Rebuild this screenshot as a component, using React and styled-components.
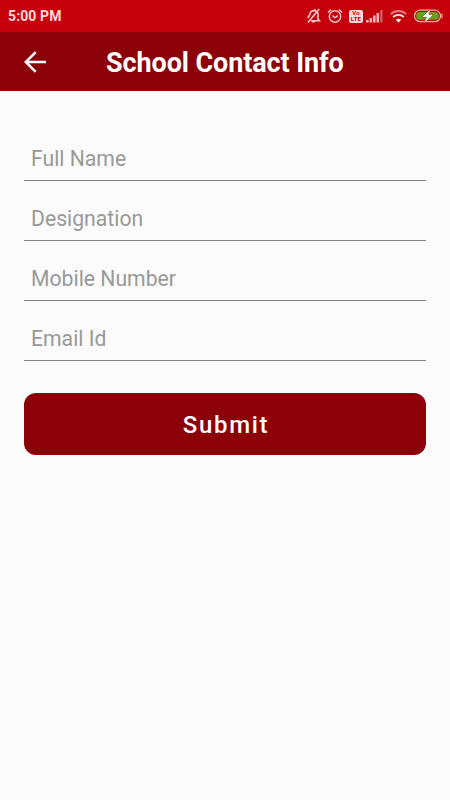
import React from 'react'
import styled, { createGlobalStyle } from 'styled-components'

const fields = ['Full Name', 'Designation', 'Mobile Number', 'Email Id']

function App() {
    return (
        <Screen>
            <GlobalStyle />
            <StatusBar>
                <Time>5:00 PM</Time>
                <StatusIcons />
            </StatusBar>
            <Header>
                <BackButton aria-label="Back">
                    <svg width="22" height="22" viewBox="0 0 22 22" fill="none" stroke="#fff" strokeWidth="2.6">
                        <path d="M22 11H2.200M11.700 1.100L1.800 11l9.900 9.900" />
                    </svg>
                </BackButton>
                <Title>School Contact Info</Title>
            </Header>
            <Form onSubmit={(e) => e.preventDefault()}>
                {fields.map((name) => (
                    <Field key={name} type="text" placeholder={name} aria-label={name} />
                ))}
                <SubmitBtn type="submit">Submit</SubmitBtn>
            </Form>
        </Screen>
    )
}

function StatusIcons() {
    return (
        <Icons>
            {/* muted bell */}
            <Icon $gap={5} width="16" height="16" viewBox="0 0 16 16" fill="none" stroke="#fbc5c8" strokeWidth="1.6">
                <path d="M1.500 9.800C3.300 9 3.400 7.500 4 5.600 4.800 3.200 6.800 2.200 9 2.800s3.600 2.700 3 5c-.5 2-.2 3.400 1.300 5H5M8.800 2.800l.5-1.600M6.200 12.800c.4 1.300 2 1.500 2.800.3" />
                <path d="M13.200 1L2 14.500" />
            </Icon>
            {/* alarm */}
            <Icon $gap={6} width="16" height="16" viewBox="0 0 16 16" fill="none" stroke="#fbc5c8" strokeWidth="1.5">
                <circle cx="8" cy="8.500" r="5.700" />
                <path d="M1 4.500L4.100 1.600M11.900 1.600L15 4.500M5.500 7.600L8 9.800l2.700-2.200" />
            </Icon>
            <Volte>
                <span>Vo</span>
                <span>LTE</span>
            </Volte>
            {/* signal */}
            <Icon $gap={7} width="17" height="13" viewBox="0 0 17 13" fill="#f7b3b7">
                <path d="M0 10h2.600v2.500H0zM3.500 8h2.600v4.500H3.500zM7 5.500h2.600v7H7zM10.500 3h2.600v9.500h-2.600z" />
                <path d="M14.200 0h2.300v12.500h-2.300z" opacity=".5" />
            </Icon>
            {/* wifi */}
            <Icon $gap={6} width="17" height="14" viewBox="0 0 17 14" fill="none" stroke="#fff" strokeWidth="1.800">
                <path d="M.8 5.200C5 .9 12 .9 16.200 5.200" opacity=".5" />
                <path d="M3.200 8c3-2.900 7.600-2.900 10.600 0" opacity=".9" />
                <path d="M5.800 10.700c1.600-1.400 3.800-1.400 5.400 0L8.500 13.600z" fill="#fff" stroke="none" />
            </Icon>
            {/* charging battery */}
            <Icon $gap={0} width="30" height="14" viewBox="0 0 30 14">
                <rect x="1.500" y="1.200" width="26" height="11.400" rx="5.700" fill="#c4000b" stroke="#e8b0a8" strokeWidth="1.300" />
                <rect x="3.200" y="3" width="22.600" height="7.800" rx="3.900" fill="#6b9f1e" />
                <path d="M29 4.800v4.400" stroke="#efa2a5" strokeWidth="1.300" />
                <path d="M17.800 0L9.300 8h4.500L11.200 14l8.800-8.200h-4.700z" fill="#fff" stroke="#c4000b" strokeWidth=".8" paintOrder="stroke" />
            </Icon>
        </Icons>
    )
}

export default App

const GlobalStyle = createGlobalStyle`
    * {
        box-sizing: border-box;
    }
    body {
        margin: 0;
        background: #fbfbfb;
        font-family: Roboto, sans-serif;
    }
`

const Screen = styled.div`
    min-height: 800px;
    background: #fbfbfb;
`

const StatusBar = styled.div`
    display: flex;
    align-items: center;
    justify-content: space-between;
    height: 32px;
    padding: 0 7px 0 8px;
    background: #c4000b;
`

const Time = styled.span`
    font-size: 14px;
    font-weight: 700;
    letter-spacing: 0.1px;
    color: #ffd9dc;
`

const Icons = styled.div`
    display: flex;
    align-items: center;
`

const Icon = styled.svg`
    flex: none;
    margin-right: ${(props) => props.$gap}px;
`

const Volte = styled.div`
    display: flex;
    flex-direction: column;
    align-items: center;
    justify-content: center;
    width: 14px;
    height: 13px;
    margin-right: 3px;
    border-radius: 2px;
    background: #fcd9db;
    color: #c4000b;
    font-size: 6px;
    font-weight: 700;
    letter-spacing: 0.2px;
    line-height: 6px;
`

const Header = styled.header`
    display: flex;
    align-items: center;
    height: 59px;
    background: #8c0007;
`

const BackButton = styled.button`
    display: flex;
    margin-left: 24px;
    padding: 0;
    border: none;
    background: none;
    cursor: pointer;
`

const Title = styled.h1`
    margin: 0 0 0 60px;
    padding-top: 2px;
    font-size: 27px;
    font-weight: 700;
    letter-spacing: -0.1px;
    line-height: 32px;
    color: #fff;
    white-space: nowrap;
`

const Form = styled.form`
    display: flex;
    flex-direction: column;
    padding: 30px 24px 0;
`

const Field = styled.input`
    height: 60px;
    padding: 16px 7px 0;
    border: none;
    border-bottom: 1px solid #858585;
    border-radius: 0;
    outline: none;
    background: none;
    color: #333;
    font-family: inherit;
    font-size: 21.2px;

    &::placeholder {
        color: #999;
        opacity: 1;
    }
`

const SubmitBtn = styled.button`
    height: 62px;
    margin-top: 32px;
    padding: 2px 0 0 2px;
    border: none;
    border-radius: 12px;
    background: #8c0007;
    color: #fff;
    font-family: inherit;
    font-size: 24px;
    font-weight: 500;
    letter-spacing: 1.7px;
    cursor: pointer;
`
